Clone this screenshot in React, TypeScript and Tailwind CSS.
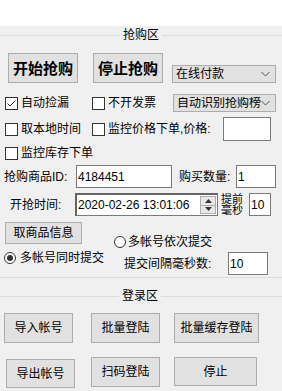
import React from "react";

function Check({ checked }: { checked?: boolean }) {
  return (
    <span className="w-[13px] h-[13px] border border-[#333333] bg-white flex items-center justify-center shrink-0">
      {checked && (
        <svg width="11" height="11" viewBox="0 0 11 11">
          <path d="M1.5 5.5 L4 8 L9.5 2.5" stroke="#333333" strokeWidth="1" fill="none" />
        </svg>
      )}
    </span>
  );
}

function Radio({ checked }: { checked?: boolean }) {
  return (
    <span className="w-[12px] h-[12px] rounded-full border border-[#333333] bg-white flex items-center justify-center shrink-0">
      {checked && <span className="w-[6px] h-[6px] rounded-full bg-[#333333]" />}
    </span>
  );
}

function Chevron() {
  return (
    <svg width="9" height="6" viewBox="0 0 9 6">
      <path d="M0.5 1 L4.5 5 L8.5 1" stroke="#555555" strokeWidth="1" fill="none" />
    </svg>
  );
}

function GroupHeader({ title, left }: { title: string; left: string }) {
  return (
    <div className="h-[18px] flex items-center">
      <div className={`${left} h-px bg-[#dcdcdc]`} />
      <span className="px-[3px] text-[12px] leading-none">{title}</span>
      <div className="flex-1 h-px bg-[#dcdcdc]" />
    </div>
  );
}

export default function App() {
  const btn = "flex items-center justify-center bg-[#e1e1e1] border border-[#adadad] text-[12px] leading-none shrink-0";
  const input = "bg-white border border-[#7a7a7a] flex items-center text-[12px] leading-none shrink-0";
  return (
    <div className="w-[282px] h-[391px] overflow-hidden [font-family:'Liberation_Sans','Noto_Sans_CJK_SC',sans-serif] text-black">
      <div className="h-[26px] bg-white" />
      <div className="bg-[#f0f0f0] h-[365px] flex flex-col">
        <GroupHeader title="抢购区" left="w-[120px]" />

        <div className="mt-[9px] flex items-end h-[30px]">
          <div className={`${btn} ml-[8px] w-[70px] h-[30px] !text-[15px] font-bold`}>开始抢购</div>
          <div className={`${btn} ml-[15px] w-[70px] h-[30px] !text-[15px] font-bold`}>停止抢购</div>
          <div className="ml-[9px] w-[104px] h-[18px] flex items-center justify-between bg-[#e1e1e1] border border-[#acacac] pl-[3px] pr-[5px] text-[12px] leading-none">
            <span>在线付款</span>
            <Chevron />
          </div>
        </div>

        <div className="mt-[11px] h-[18px] flex items-center text-[12px] leading-none">
          <div className="ml-[5px] w-[87px] flex items-center">
            <Check checked />
            <span className="ml-[3px]">自动捡漏</span>
          </div>
          <div className="w-[81px] flex items-center">
            <Check />
            <span className="ml-[3px]">不开发票</span>
          </div>
          <div className="w-[103px] h-[18px] flex items-center justify-between bg-[#e1e1e1] border border-[#acacac] pl-[3px] pr-[5px] overflow-hidden">
            <span className="whitespace-nowrap overflow-hidden">自动识别抢购榜</span>
            <Chevron />
          </div>
        </div>

        <div className="mt-[5px] h-[24px] flex items-center text-[12px] leading-none">
          <div className="ml-[5px] w-[87px] flex items-center">
            <Check />
            <span className="ml-[3px]">取本地时间</span>
          </div>
          <div className="w-[131px] flex items-center">
            <Check />
            <span className="ml-[3px] whitespace-nowrap">监控价格下单,价格:</span>
          </div>
          <div className={`${input} w-[48px] h-[24px]`} />
        </div>

        <div className="mt-[3px] h-[18px] flex items-center text-[12px] leading-none">
          <div className="ml-[5px] flex items-center">
            <Check />
            <span className="ml-[3px]">监控库存下单</span>
          </div>
        </div>

        <div className="mt-[3px] h-[23px] flex items-center text-[12px] leading-none">
          <span className="ml-[4px] w-[72px] whitespace-nowrap">抢购商品ID:</span>
          <div className={`${input} w-[96px] h-[23px] pl-[1px]`}>4184451</div>
          <span className="ml-[7px] w-[57px] whitespace-nowrap">购买数量:</span>
          <div className={`${input} w-[40px] h-[23px] pl-[1px]`}>1</div>
        </div>

        <div className="mt-[5px] h-[23px] flex items-center text-[12px] leading-none">
          <span className="ml-[10px] w-[65px] whitespace-nowrap">开抢时间:</span>
          <div className="w-[143px] h-[23px] bg-white border border-[#7a7a7a] border-l-2 border-t-2 border-l-[#646464] border-t-[#646464] flex items-center justify-between pl-[1px] pr-[1px]">
            <span className="text-[12px] whitespace-nowrap">2020-02-26 13:01:06</span>
            <div className="w-[16px] h-[18px] flex flex-col border border-[#adadad] bg-[#e8e8e8]">
              <div className="flex-1 flex items-center justify-center border-b border-[#adadad]">
                <svg width="7" height="4" viewBox="0 0 7 4"><path d="M0 4 L3.5 0 L7 4 Z" fill="#333333" /></svg>
              </div>
              <div className="flex-1 flex items-center justify-center">
                <svg width="7" height="4" viewBox="0 0 7 4"><path d="M0 0 L3.5 4 L7 0 Z" fill="#333333" /></svg>
              </div>
            </div>
          </div>
          <div className="w-[28px] pl-[3px] flex flex-col text-[11px] leading-[11px]">
            <span className="leading-[11px]">提前</span>
            <span className="leading-[11px]">毫秒</span>
          </div>
          <div className={`${input} ml-[3px] w-[22px] h-[23px] pl-[1px]`}>10</div>
        </div>

        <div className="mt-[6px] flex text-[12px] leading-none">
          <div className="w-[114px] flex flex-col">
            <div className={`${btn} ml-[5px] w-[77px] h-[22px]`}>取商品信息</div>
            <div className="mt-[7px] h-[14px] ml-[4px] flex items-center">
              <Radio checked />
              <span className="ml-[4px] whitespace-nowrap">多帐号同时提交</span>
            </div>
          </div>
          <div className="flex flex-col">
            <div className="mt-[13px] h-[14px] flex items-center">
              <Radio />
              <span className="ml-[2px] whitespace-nowrap">多帐号依次提交</span>
            </div>
            <div className="mt-[3px] h-[23px] flex items-center">
              <span className="ml-[10px] w-[104px] whitespace-nowrap">提交间隔毫秒数:</span>
              <div className={`${input} w-[40px] h-[23px] pl-[1px]`}>10</div>
            </div>
          </div>
        </div>

        <div className="mt-[2px] h-px bg-[#dcdcdc]" />

        <div className="mt-[9px]">
          <GroupHeader title="登录区" left="w-[119px]" />
        </div>

        <div className="mt-[8px] h-[30px] flex items-start">
          <div className={`${btn} ml-[4px] w-[69px] h-[30px]`}>导入帐号</div>
          <div className={`${btn} ml-[18px] w-[69px] h-[30px]`}>批量登陆</div>
          <div className={`${btn} ml-[14px] w-[85px] h-[30px]`}>批量缓存登陆</div>
        </div>

        <div className="mt-[14px] h-[31px] flex items-start">
          <div className={`${btn} ml-[6px] mt-[2px] w-[69px] h-[29px]`}>导出帐号</div>
          <div className={`${btn} ml-[16px] w-[69px] h-[30px]`}>扫码登陆</div>
          <div className={`${btn} ml-[14px] w-[83px] h-[29px]`}>停止</div>
        </div>
      </div>
    </div>
  );
}
